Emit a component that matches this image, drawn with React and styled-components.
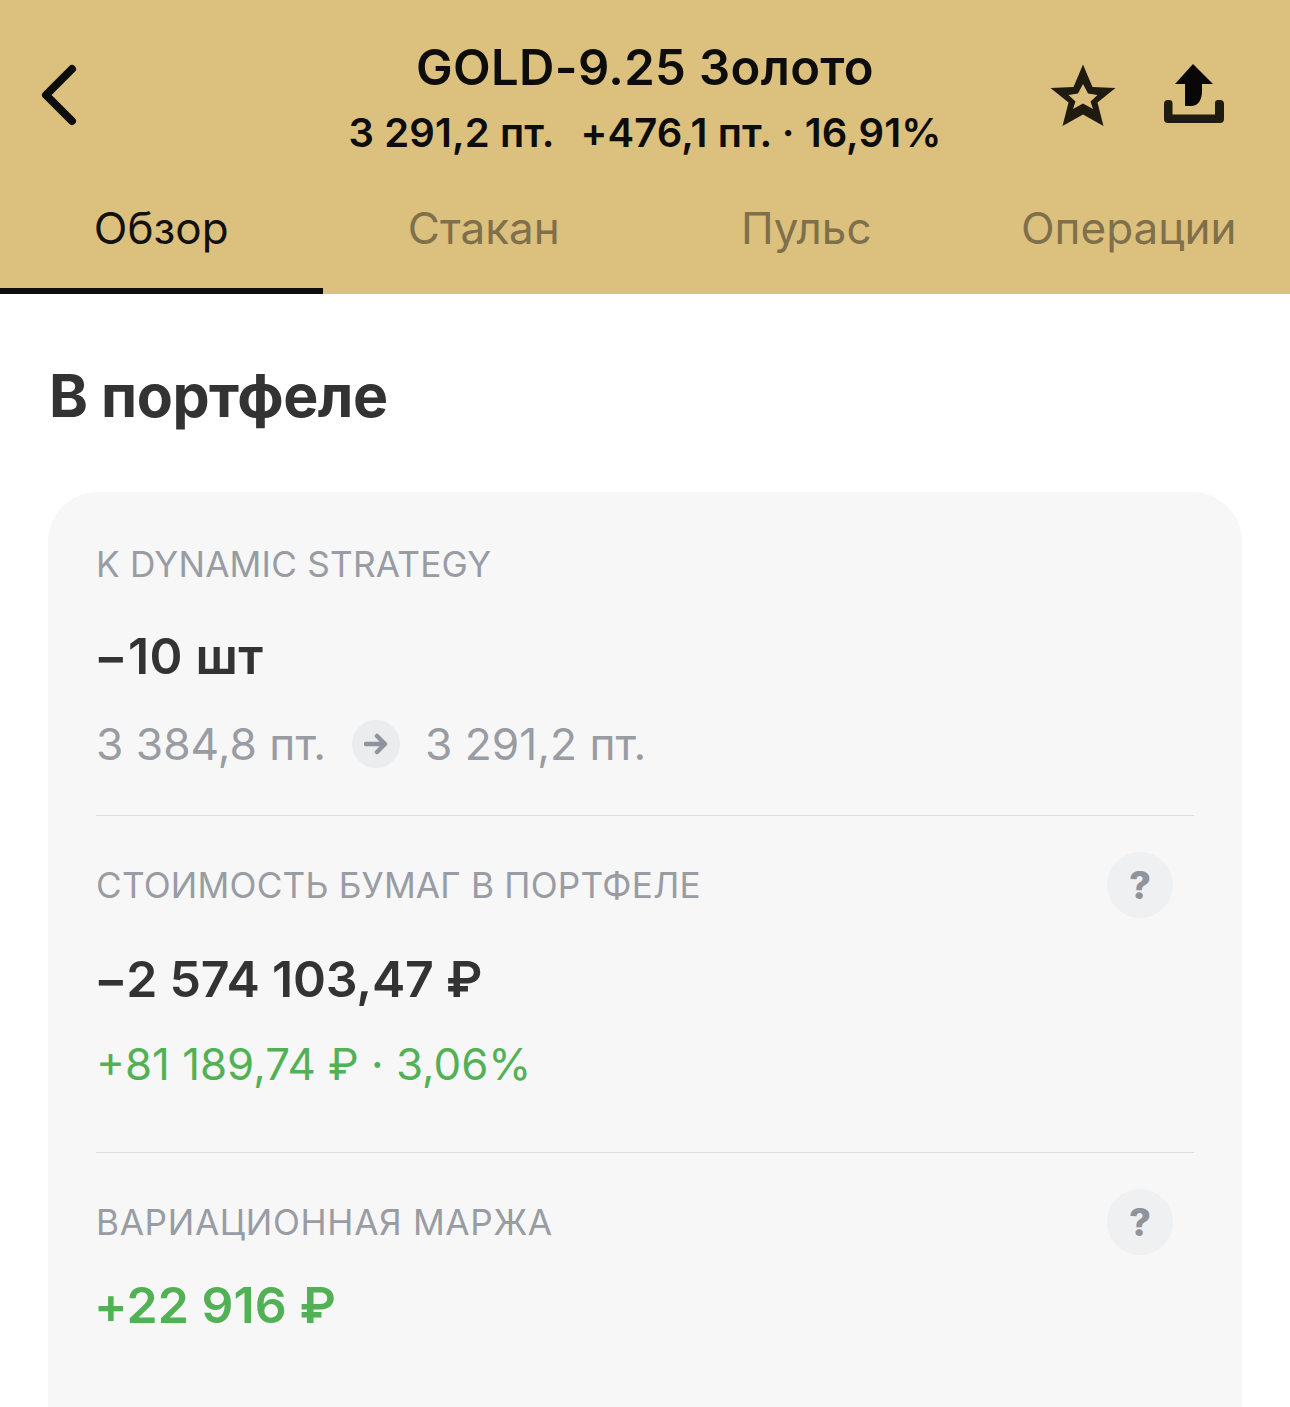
import React from 'react';
import styled, { createGlobalStyle } from 'styled-components';

const GlobalStyle = createGlobalStyle`
  html, body {
    margin: 0;
    padding: 0;
    background: #fff;
    font-family: Inter, "Noto Sans", sans-serif;
  }
`;

const Page = styled.div`
  width: 1290px;
  height: 1407px;
  overflow: hidden;
  background: #fff;
`;

const Header = styled.header`
  height: 294px;
  background: #dcc07e;
  display: flex;
  flex-direction: column;
`;

const TopBar = styled.div`
  height: 183px;
  display: grid;
  grid-template-columns: 340px 1fr 340px;
  align-items: start;
`;

const BackButton = styled.div`
  padding: 64px 0 0 40px;
  display: flex;
`;

const TitleBlock = styled.div`
  padding-top: 38px;
  text-align: center;
  color: #0d0d0d;
  white-space: nowrap;
`;

const Title = styled.div`
  font-size: 49px;
  line-height: 60px;
  font-weight: 600;
  letter-spacing: 0.35px;
`;

const Subtitle = styled.div`
  display: flex;
  justify-content: center;
  gap: 26px;
  margin-top: 10px;
  font-size: 40px;
  line-height: 50px;
  font-weight: 600;
  letter-spacing: 0.1px;
`;

const Actions = styled.div`
  display: flex;
  justify-content: flex-end;
  gap: 48px;
  padding: 64px 66px 0 0;
`;

const Tabs = styled.nav`
  flex: 1;
  display: grid;
  grid-template-columns: repeat(4, 1fr);
`;

const Tab = styled.div`
  display: flex;
  justify-content: center;
  padding-top: 20px;
  font-size: 44px;
  line-height: 50px;
  color: ${p => (p.$active ? '#111' : '#7f704b')};
  border-bottom: 6px solid ${p => (p.$active ? '#0d0d0d' : 'transparent')};
`;

const Content = styled.main`
  padding: 69px 48px 0;
`;

const Heading = styled.h1`
  margin: 0 0 63px 1px;
  font-size: 59px;
  line-height: 66px;
  font-weight: 700;
  color: #333;
  letter-spacing: -0.5px;
`;

const Card = styled.section`
  background: #f7f7f8;
  border-radius: 50px 50px 0 0;
  padding: 0 48px;
  height: 920px;
`;

const Block = styled.div`
  height: ${p => p.$height}px;
  box-sizing: border-box;
  border-bottom: ${p => (p.$divider ? '1px solid #dcdee1' : 'none')};
`;

const LabelRow = styled.div`
  display: flex;
  align-items: center;
  justify-content: space-between;
  height: 66px;
  padding: ${p => p.$top}px 21px 0 0;
`;

const Label = styled.div`
  font-size: 35.2px;
  line-height: 44px;
  letter-spacing: ${p => p.$spacing || 0.2}px;
  color: #999ca3;
  text-transform: uppercase;
`;

const Value = styled.div`
  font-size: 50px;
  line-height: 60px;
  font-weight: 600;
  letter-spacing: ${p => p.$spacing || -0.2}px;
  color: ${p => p.$color || '#333'};
  margin: ${p => p.$top}px 0 0 -2px;
`;

const SubValue = styled.div`
  display: flex;
  align-items: center;
  font-size: ${p => p.$size}px;
  line-height: 56px;
  color: ${p => p.$color};
  margin-top: ${p => p.$top}px;
`;

const ArrowBadge = styled.span`
  width: 48px;
  height: 48px;
  border-radius: 50%;
  background: #eaecee;
  margin: 0 25px 0 26px;
  display: flex;
  align-items: center;
  justify-content: center;
`;

const HelpButton = styled.span`
  width: 66px;
  height: 66px;
  border-radius: 50%;
  background: #eff0f2;
  color: #8f939c;
  font-size: 38px;
  font-weight: 800;
  display: flex;
  align-items: center;
  justify-content: center;
`;

const BackIcon = () => (
  <svg width="38" height="62" viewBox="0 0 38 62" fill="none">
    <path d="M32 5 L6 31 L32 57" stroke="#0d0d0d" strokeWidth="8" strokeLinecap="round" strokeLinejoin="round" />
  </svg>
);

const StarIcon = () => (
  <svg width="66" height="64" viewBox="0 0 66 64">
    <path
      fillRule="evenodd"
      fill="#1f1b10"
      d="M33 0.5 L42.5 23 L65.5 24 L47.5 38.5 L53.5 62 L33 50.5 L12.5 62 L18.5 38.5 L0.5 24 L23.5 23 Z M33 20 L28 29.5 L18.5 31 L25.5 37.5 L23 45 L33 39.5 L43 45 L40.5 37.5 L47.5 31 L38 29.5 Z"
    />
  </svg>
);

const ShareIcon = () => (
  <svg width="60" height="60" viewBox="0 0 60 60">
    <path fill="#0a0806" d="M29 0 L49 20 L38 20 L38 27 C38 36 34 42 27 42 L21 42 L21 20 L11 20 Z" />
    <path
      fill="#1f1b10"
      d="M4 36 H5 Q8.5 36 8.5 39 V50.5 H51 V39 Q51 36 54 36 H56 Q60 36 60 40 V55 Q60 59 56 59 H4 Q0 59 0 55 V40 Q0 36 4 36 Z"
    />
  </svg>
);

const ArrowIcon = () => (
  <svg width="24" height="22" viewBox="0 0 24 22" fill="none">
    <path d="M2 11 H20 M13 3 L21 11 L13 19" stroke="#8f939c" strokeWidth="4.5" strokeLinecap="round" strokeLinejoin="round" />
  </svg>
);

const tabs = ['Обзор', 'Стакан', 'Пульс', 'Операции'];

export default function App() {
  return (
    <Page>
      <GlobalStyle />
      <Header>
        <TopBar>
          <BackButton><BackIcon /></BackButton>
          <TitleBlock>
            <Title>GOLD-9.25 Золото</Title>
            <Subtitle>
              <span>3 291,2 пт.</span>
              <span>+476,1 пт. · 16,91%</span>
            </Subtitle>
          </TitleBlock>
          <Actions>
            <StarIcon />
            <ShareIcon />
          </Actions>
        </TopBar>
        <Tabs>
          {tabs.map((t, i) => (
            <Tab key={t} $active={i === 0}>{t}</Tab>
          ))}
        </Tabs>
      </Header>
      <Content>
        <Heading>В портфеле</Heading>
        <Card>
          <Block $height={324} $divider>
            <LabelRow $top={39}><Label>K Dynamic Strategy</Label></LabelRow>
            <Value $top={29} $spacing={0.3}>−10 шт</Value>
            <SubValue $top={30} $size={44.3} $color="#999ca3">
              3 384,8 пт.
              <ArrowBadge><ArrowIcon /></ArrowBadge>
              3 291,2 пт.
            </SubValue>
          </Block>
          <Block $height={337} $divider>
            <LabelRow $top={36}>
              <Label>Стоимость бумаг в портфеле</Label>
              <HelpButton>?</HelpButton>
            </LabelRow>
            <Value $top={31}>−2 574 103,47 ₽</Value>
            <SubValue $top={28} $size={43.8} $color="#52b055">+81 189,74 ₽ · 3,06%</SubValue>
          </Block>
          <Block $height={200}>
            <LabelRow $top={36}>
              <Label $spacing={0.65}>Вариационная маржа</Label>
              <HelpButton>?</HelpButton>
            </LabelRow>
            <Value $top={20} $spacing={0.05} $color="#52b055">+22 916 ₽</Value>
          </Block>
        </Card>
      </Content>
    </Page>
  );
}
